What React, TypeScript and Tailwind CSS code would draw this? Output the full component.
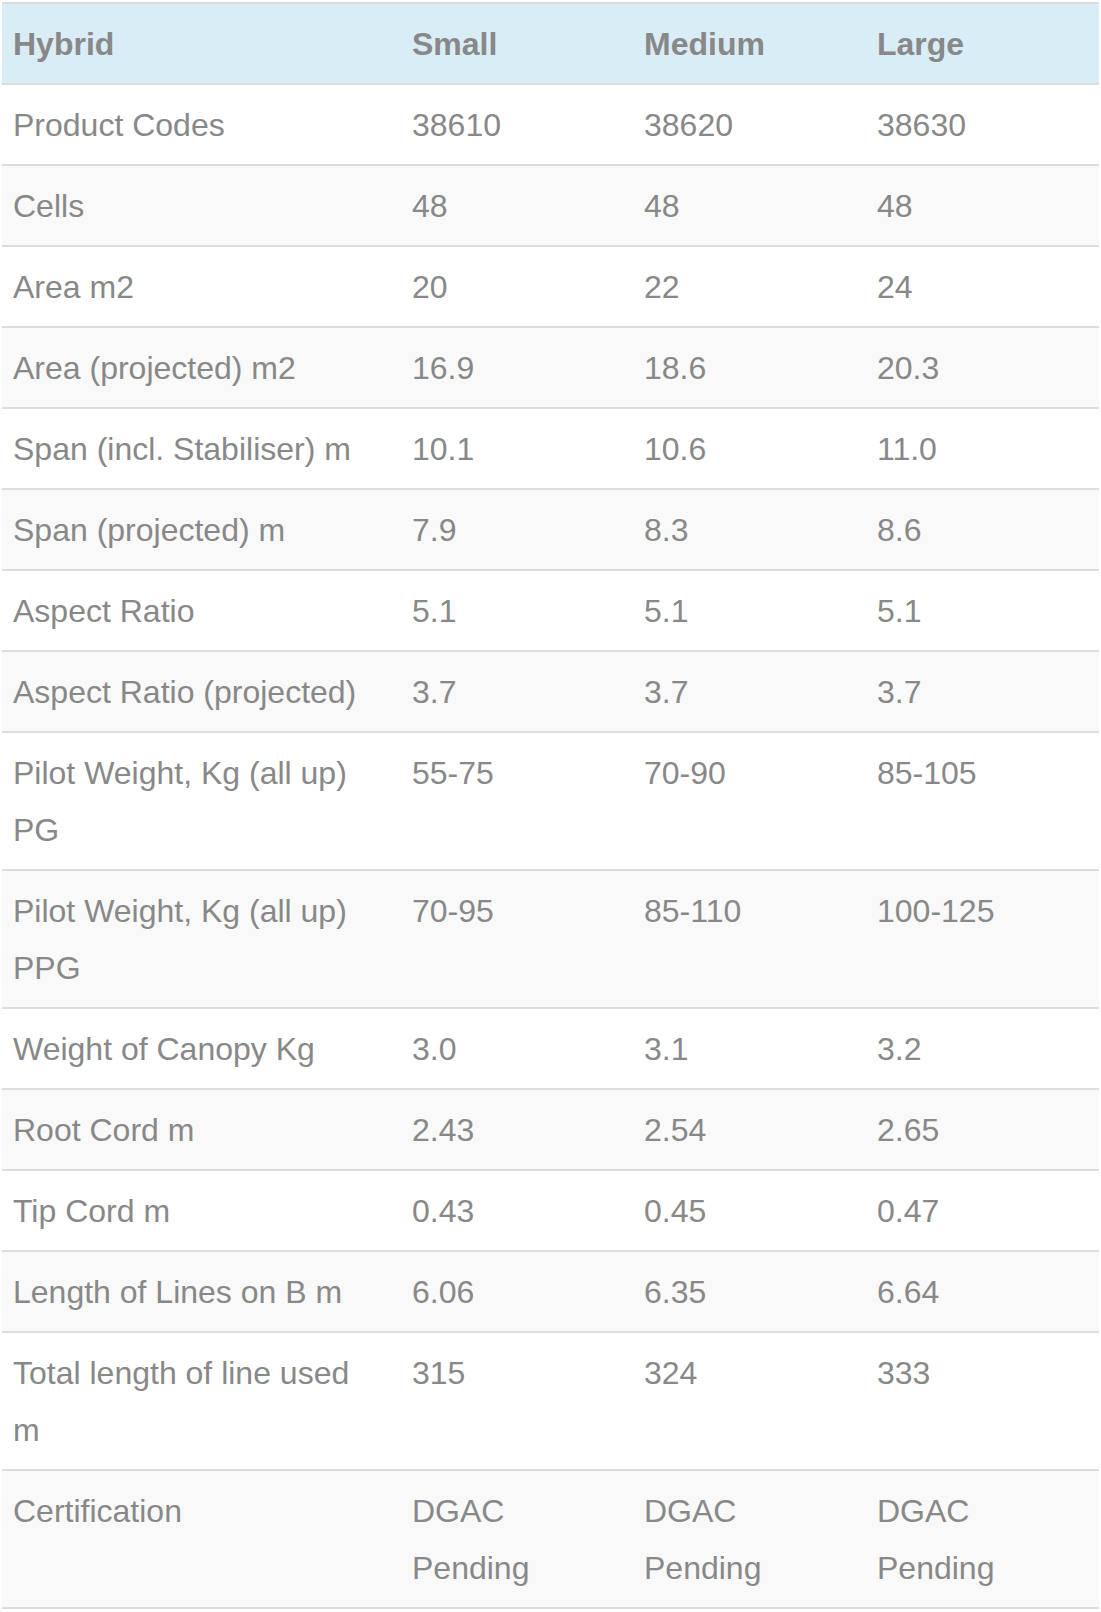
const sizes = ["Small", "Medium", "Large"];

const rows: [string, string, string, string][] = [
  ["Product Codes", "38610", "38620", "38630"],
  ["Cells", "48", "48", "48"],
  ["Area m2", "20", "22", "24"],
  ["Area (projected) m2", "16.9", "18.6", "20.3"],
  ["Span (incl. Stabiliser) m", "10.1", "10.6", "11.0"],
  ["Span (projected) m", "7.9", "8.3", "8.6"],
  ["Aspect Ratio", "5.1", "5.1", "5.1"],
  ["Aspect Ratio (projected)", "3.7", "3.7", "3.7"],
  ["Pilot Weight, Kg (all up) PG", "55-75", "70-90", "85-105"],
  ["Pilot Weight, Kg (all up) PPG", "70-95", "85-110", "100-125"],
  ["Weight of Canopy Kg", "3.0", "3.1", "3.2"],
  ["Root Cord m", "2.43", "2.54", "2.65"],
  ["Tip Cord m", "0.43", "0.45", "0.47"],
  ["Length of Lines on B m", "6.06", "6.35", "6.64"],
  ["Total length of line used m", "315", "324", "333"],
  ["Certification", "DGAC Pending", "DGAC Pending", "DGAC Pending"],
];

export default function App() {
  return (
    <div className="bg-white pl-[2px] pt-[2px] font-['Liberation_Sans',Arial,sans-serif] text-[#888888]">
      <table className="w-[1097px] table-fixed border-collapse text-[32px] leading-[57px]">
        <colgroup>
          <col className="w-[400px]" />
          <col className="w-[232px]" />
          <col className="w-[233px]" />
          <col className="w-[232px]" />
        </colgroup>
        <thead>
          <tr className="bg-[#d9edf7] border-t-2 border-[#dddddd]">
            <th className="pl-[11px] pr-[28px] pt-[12px] pb-[10px] text-left align-top font-bold">Hybrid</th>
            {sizes.map((s) => (
              <th key={s} className="pl-[10px] pr-[8px] pt-[12px] pb-[10px] text-left align-top font-bold">
                {s}
              </th>
            ))}
          </tr>
        </thead>
        <tbody>
          {rows.map((r, i) => (
            <tr
              key={r[0]}
              className={`border-t-2 border-[#dddddd] ${i % 2 === 1 ? "bg-[#f9f9f9]" : "bg-white"} ${
                i === rows.length - 1 ? "border-b-2" : ""
              }`}
            >
              {r.map((c, j) => (
                <td
                  key={j}
                  className={`${j === 0 ? "pl-[11px] pr-[28px]" : "pl-[10px] pr-[8px]"} pt-[12px] pb-[10px] text-left align-top`}
                >
                  {c}
                </td>
              ))}
            </tr>
          ))}
        </tbody>
      </table>
    </div>
  );
}
